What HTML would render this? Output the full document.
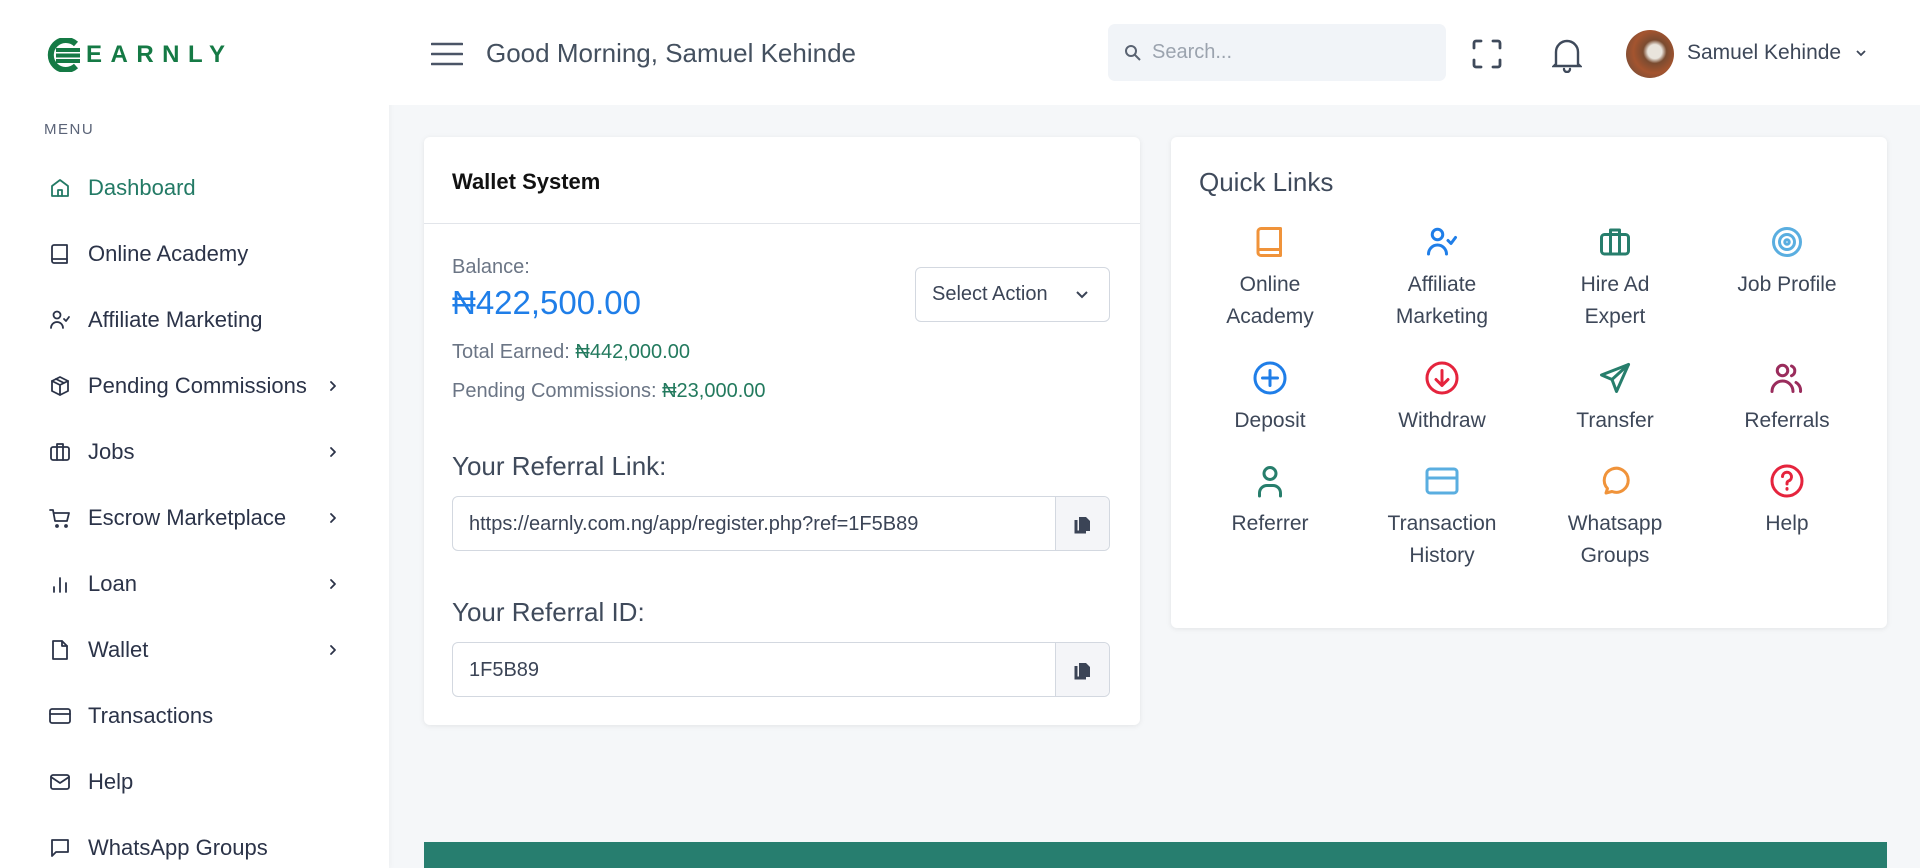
<!DOCTYPE html>
<html><head><meta charset="utf-8"><style>
*{box-sizing:border-box;margin:0;padding:0}
body{width:1920px;height:868px;overflow:hidden;background:#f5f7f9;font-family:"Liberation Sans",sans-serif;position:relative;color:#334155}
.side{position:absolute;left:0;top:0;width:389px;height:868px;background:#fff;box-shadow:1px 0 6px rgba(0,0,0,.04)}
.logo{position:absolute;left:46px;top:38px;display:flex;align-items:center}
.logo span{font-weight:bold;color:#157a45;font-size:24px;letter-spacing:8.5px;margin-left:4px}
.menu{position:absolute;left:44px;top:121px;font-size:15px;letter-spacing:1.5px;color:#5b6478}
.item{position:absolute;left:48px;height:30px;display:flex;align-items:center;font-size:22px;color:#2b3348;width:300px}
.item svg{width:24px;height:24px;margin-right:16px;fill:none;stroke:#2b3348;stroke-width:1.8;stroke-linecap:round;stroke-linejoin:round}
.item .ch{position:absolute;left:278px;width:14px;height:14px;margin:0}
.header{position:absolute;left:389px;top:0;right:0;height:105px;background:#fff}
.card{position:absolute;background:#fff;border-radius:6px;box-shadow:0 1px 6px rgba(0,0,0,.08)}
.lab{position:absolute;font-size:20px;color:#6b7585}
.g{color:#237a5e}
.inp{position:absolute;left:28px;width:658px;height:55px;border:1px solid #d3d8e0;border-radius:6px;font-size:20px;color:#3b4456;padding:16px 16px;}
.inp .cp{position:absolute;right:0;top:0;width:54px;height:53px;background:#f4f5f8;border-left:1px solid #d3d8e0;border-radius:0 6px 6px 0;display:flex;align-items:center;justify-content:center}
.ql{position:absolute;width:170px;text-align:center;font-size:21px;line-height:32px;color:#3d4758}
.ql svg{display:block;margin:0 auto 9px;width:36px;height:36px;fill:none;stroke-width:2;stroke-linecap:round;stroke-linejoin:round}
</style></head><body>
<div class="side">
 <div class="logo"><svg width="36" height="34" viewBox="0 0 36 34"><path d="M30 6A15 15 0 1 0 30 28" fill="none" stroke="#157a45" stroke-width="6"/><rect x="10" y="10" width="24" height="4" fill="#157a45"/><rect x="10" y="15.5" width="24" height="4" fill="#157a45"/><rect x="10" y="21" width="24" height="4" fill="#157a45"/></svg><span>EARNLY</span></div>
 <div class="menu">MENU</div>
 <div class="item" style="top:173px;color:#237a65"><svg viewBox="0 0 24 24" style="stroke:#237a65"><path d="M4 10l8-6 8 6v10H4z"/><path d="M10 20v-6h4v6"/></svg>Dashboard</div>
 <div class="item" style="top:239px"><svg viewBox="0 0 24 24"><path d="M6 3h13v18H6a2 2 0 0 1-2-2V5a2 2 0 0 1 2-2z"/><path d="M4 17h15"/></svg>Online Academy</div>
 <div class="item" style="top:305px"><svg viewBox="0 0 24 24"><circle cx="9" cy="7" r="3.5"/><path d="M3 20a6 6 0 0 1 12 0"/><path d="M16 11l2 2 3-4"/></svg>Affiliate Marketing</div>
 <div class="item" style="top:371px"><svg viewBox="0 0 24 24"><path d="M12 3l8 4v10l-8 4-8-4V7z"/><path d="M4 7l8 4 8-4M12 11v10M8 5l8 4"/></svg>Pending Commissions<svg class="ch" viewBox="0 0 14 14"><path d="M5 3l4 4-4 4"/></svg></div>
 <div class="item" style="top:437px"><svg viewBox="0 0 24 24"><rect x="3" y="7" width="18" height="13" rx="2"/><path d="M9 7V4h6v3M9 7v13M15 7v13"/></svg>Jobs<svg class="ch" viewBox="0 0 14 14"><path d="M5 3l4 4-4 4"/></svg></div>
 <div class="item" style="top:503px"><svg viewBox="0 0 24 24"><path d="M2 4h3l2 11h12l2-8H6"/><circle cx="9" cy="20" r="1"/><circle cx="18" cy="20" r="1"/></svg>Escrow Marketplace<svg class="ch" viewBox="0 0 14 14"><path d="M5 3l4 4-4 4"/></svg></div>
 <div class="item" style="top:569px"><svg viewBox="0 0 24 24"><path d="M6 20v-5M12 20V6M18 20v-9"/></svg>Loan<svg class="ch" viewBox="0 0 14 14"><path d="M5 3l4 4-4 4"/></svg></div>
 <div class="item" style="top:635px"><svg viewBox="0 0 24 24"><path d="M5 3h9l5 5v13H5z"/><path d="M14 3v5h5"/></svg>Wallet<svg class="ch" viewBox="0 0 14 14"><path d="M5 3l4 4-4 4"/></svg></div>
 <div class="item" style="top:701px"><svg viewBox="0 0 24 24"><rect x="2" y="5" width="20" height="14" rx="2"/><path d="M2 10h20"/></svg>Transactions</div>
 <div class="item" style="top:767px"><svg viewBox="0 0 24 24"><rect x="3" y="5" width="18" height="14" rx="2"/><path d="M3 7l9 6 9-6"/></svg>Help</div>
 <div class="item" style="top:833px"><svg viewBox="0 0 24 24"><path d="M4 4h16v12H8l-4 4z"/></svg>WhatsApp Groups</div>
</div>
<div class="header">
 <svg style="position:absolute;left:42px;top:42px" width="32" height="24" viewBox="0 0 32 24"><path d="M1 2h30M1 12h30M1 22h30" stroke="#4b5567" stroke-width="2.6" stroke-linecap="round"/></svg>
 <div style="position:absolute;left:97px;top:38px;font-size:26px;color:#44505f">Good Morning, Samuel Kehinde</div>
 <div style="position:absolute;left:719px;top:24px;width:338px;height:57px;background:#f1f4f8;border-radius:7px">
  <svg style="position:absolute;left:16px;top:20px" width="18" height="18" viewBox="0 0 18 18"><circle cx="7" cy="7" r="5" fill="none" stroke="#5a6372" stroke-width="2"/><path d="M11 11l5 5" stroke="#5a6372" stroke-width="2"/></svg>
  <span style="position:absolute;left:44px;top:17px;font-size:20px;color:#9ba3ae">Search...</span></div>
 <svg style="position:absolute;left:1083px;top:39px" width="30" height="30" viewBox="0 0 30 30" fill="none" stroke="#3f4a5b" stroke-width="2.8" stroke-linecap="round"><path d="M2 9V4a2 2 0 0 1 2-2h5M21 2h5a2 2 0 0 1 2 2v5M28 21v5a2 2 0 0 1-2 2h-5M9 28H4a2 2 0 0 1-2-2v-5"/></svg>
 <svg style="position:absolute;left:1163px;top:37px" width="30" height="36" viewBox="0 0 30 36" fill="none" stroke="#3f4a5b" stroke-width="2.4" stroke-linecap="round"><path d="M4 27V15a11 11 0 0 1 22 0v12l2 2H2z"/><path d="M12 32a3 3 0 0 0 6 0"/></svg>
 <div style="position:absolute;left:1237px;top:30px;width:48px;height:48px;border-radius:50%;background:radial-gradient(circle at 60% 45%,#e9e4dc 0 18%,#7a4b30 30%,#a4542f 55%,#5e4a3c 100%)"></div>
 <div style="position:absolute;left:1298px;top:41px;font-size:21px;color:#3d4758">Samuel Kehinde</div>
 <svg style="position:absolute;left:1466px;top:49px" width="12" height="8" viewBox="0 0 12 8"><path d="M2 2l4 4 4-4" fill="none" stroke="#3d4758" stroke-width="1.8"/></svg>
</div>

<div class="card" style="left:424px;top:137px;width:716px;height:588px">
 <div style="position:absolute;left:28px;top:32px;font-size:22px;font-weight:bold;color:#111">Wallet System</div>
 <div style="position:absolute;left:0;right:0;top:86px;height:1px;background:#e2e5ea"></div>
 <div class="lab" style="left:28px;top:119px">Balance:</div>
 <div style="position:absolute;left:28px;top:147px;font-size:33px;color:#1f7ee8">₦422,500.00</div>
 <div class="lab" style="left:28px;top:204px">Total Earned: <span class="g">₦442,000.00</span></div>
 <div class="lab" style="left:28px;top:243px">Pending Commissions: <span class="g">₦23,000.00</span></div>
 <div style="position:absolute;left:491px;top:130px;width:195px;height:55px;border:1px solid #d3d8e0;border-radius:6px;font-size:20px;color:#3b4456;padding:15px 16px">Select Action<svg style="position:absolute;right:20px;top:22px" width="14" height="9" viewBox="0 0 14 9"><path d="M2 2l5 5 5-5" fill="none" stroke="#3b4456" stroke-width="2"/></svg></div>
 <div style="position:absolute;left:28px;top:314px;font-size:26px;color:#3f4a5b">Your Referral Link:</div>
 <div class="inp" style="top:359px">https://earnly.com.ng/app/register.php?ref=1F5B89<div class="cp"><svg width="18" height="20" viewBox="0 0 18 20"><path d="M5 3h7l4 4v10H5z" fill="#3b4456"/><path d="M2 6v12h10" fill="none" stroke="#3b4456" stroke-width="3"/></svg></div></div>
 <div style="position:absolute;left:28px;top:460px;font-size:26px;color:#3f4a5b">Your Referral ID:</div>
 <div class="inp" style="top:505px">1F5B89<div class="cp"><svg width="18" height="20" viewBox="0 0 18 20"><path d="M5 3h7l4 4v10H5z" fill="#3b4456"/><path d="M2 6v12h10" fill="none" stroke="#3b4456" stroke-width="3"/></svg></div></div>
</div>

<div class="card" style="left:1171px;top:137px;width:716px;height:491px">
 <div style="position:absolute;left:28px;top:30px;font-size:26px;color:#3f4a5b">Quick Links</div>
 <div class="ql" style="left:14px;top:87px"><svg viewBox="0 0 24 24" stroke="#f0933a"><path d="M6 3h13v18H6a2 2 0 0 1-2-2V5a2 2 0 0 1 2-2z"/><path d="M4 17h15"/></svg>Online<br>Academy</div>
 <div class="ql" style="left:186px;top:87px"><svg viewBox="0 0 24 24" stroke="#1f7ee8"><circle cx="9" cy="7" r="3.5"/><path d="M3 20a6 6 0 0 1 12 0"/><path d="M16 11l2 2 3-4"/></svg>Affiliate<br>Marketing</div>
 <div class="ql" style="left:359px;top:87px"><svg viewBox="0 0 24 24" stroke="#277e6c"><rect x="3" y="7" width="18" height="13" rx="2"/><path d="M9 7V4h6v3M9 7v13M15 7v13"/></svg>Hire Ad<br>Expert</div>
 <div class="ql" style="left:531px;top:87px"><svg viewBox="0 0 24 24" stroke="#5aaee0"><circle cx="12" cy="12" r="9"/><circle cx="12" cy="12" r="5"/><circle cx="12" cy="12" r="1.5"/></svg>Job Profile</div>
 <div class="ql" style="left:14px;top:223px"><svg viewBox="0 0 24 24" stroke="#1f7ee8"><circle cx="12" cy="12" r="10"/><path d="M12 7v10M7 12h10"/></svg>Deposit</div>
 <div class="ql" style="left:186px;top:223px"><svg viewBox="0 0 24 24" stroke="#e5243d"><circle cx="12" cy="12" r="10"/><path d="M12 7v10M8 13l4 4 4-4"/></svg>Withdraw</div>
 <div class="ql" style="left:359px;top:223px"><svg viewBox="0 0 24 24" stroke="#277e6c"><path d="M21 3L3 10l7 3 3 8z"/><path d="M21 3L10 13"/></svg>Transfer</div>
 <div class="ql" style="left:531px;top:223px"><svg viewBox="0 0 24 24" stroke="#9a2c5c"><circle cx="9" cy="7" r="3.5"/><path d="M2 21a7 7 0 0 1 14 0M15 4a3.5 3.5 0 0 1 0 6.5M18 15a6 6 0 0 1 3 6"/></svg>Referrals</div>
 <div class="ql" style="left:14px;top:326px"><svg viewBox="0 0 24 24" stroke="#277e6c"><circle cx="12" cy="7" r="4"/><path d="M5 22v-2a5 5 0 0 1 5-5h4a5 5 0 0 1 5 5v2"/></svg>Referrer</div>
 <div class="ql" style="left:186px;top:326px"><svg viewBox="0 0 24 24" stroke="#5aaee0"><rect x="2" y="4" width="20" height="16" rx="2"/><path d="M2 10h20"/></svg>Transaction<br>History</div>
 <div class="ql" style="left:359px;top:326px"><svg viewBox="0 0 24 24" stroke="#f0933a"><path d="M6 20l1-3a8 8 0 1 1 3 2z"/></svg>Whatsapp<br>Groups</div>
 <div class="ql" style="left:531px;top:326px"><svg viewBox="0 0 24 24" stroke="#e5243d"><circle cx="12" cy="12" r="10"/><path d="M9 9a3 3 0 1 1 4 3c-1 .5-1 1-1 2M12 17v.5"/></svg>Help</div>
</div>

<div style="position:absolute;left:424px;top:842px;width:1463px;height:26px;background:#277e6f"></div>
</body></html>
